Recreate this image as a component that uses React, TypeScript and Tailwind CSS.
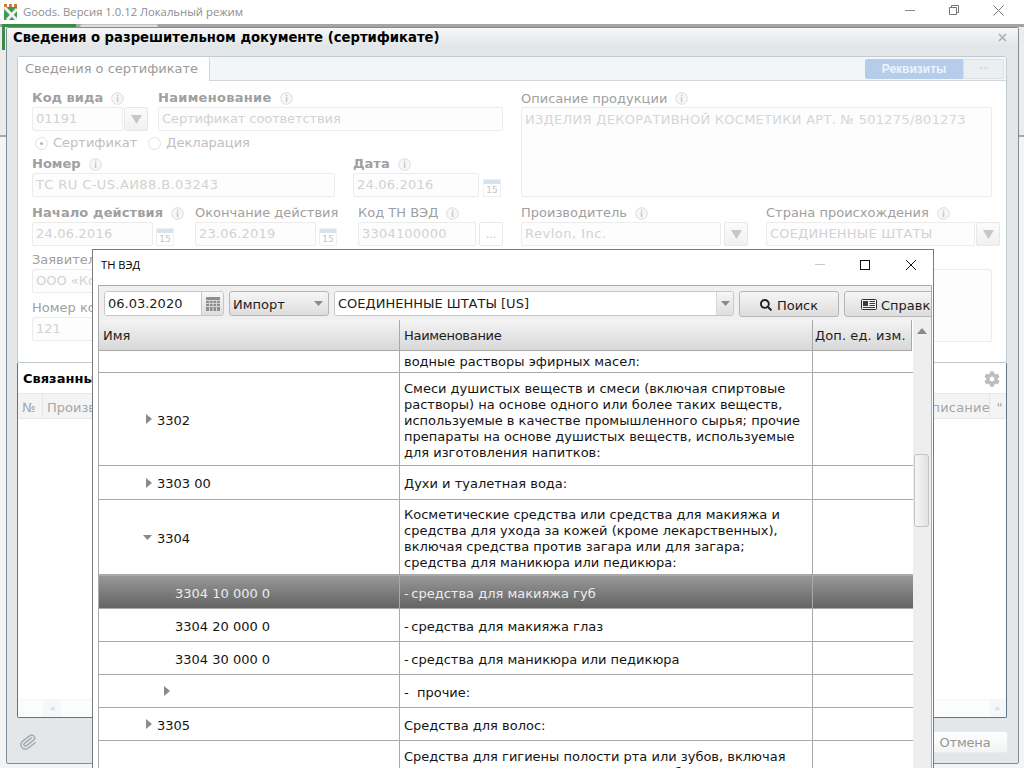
import { FaCog, FaSearch } from 'react-icons/fa';
import { Paperclip } from 'lucide-react';

const rows = [
  { h: 'h-[22px]', name: '', pad: '', arrow: '', first: true, lines: ['водные растворы эфирных масел:'] },
  { h: 'h-[93px]', name: '3302', pad: 'pl-[58px]', arrow: 'right', lines: ['Смеси душистых веществ и смеси (включая спиртовые', 'растворы) на основе одного или более таких веществ,', 'используемые в качестве промышленного сырья; прочие', 'препараты на основе душистых веществ, используемые', 'для изготовления напитков:'] },
  { h: 'h-[34px]', name: '3303 00', pad: 'pl-[58px]', arrow: 'right', lines: ['Духи и туалетная вода:'] },
  { h: 'h-[75px]', name: '3304', pad: 'pl-[58px]', arrow: 'down', lines: ['Косметические средства или средства для макияжа и', 'средства для ухода за кожей (кроме лекарственных),', 'включая средства против загара или для загара;', 'средства для маникюра или педикюра:'] },
  { h: 'h-[34px]', name: '3304 10 000 0', pad: 'pl-[76px]', arrow: '', selected: true, lines: ['-\u2009средства для макияжа губ'] },
  { h: 'h-[33px]', name: '3304 20 000 0', pad: 'pl-[76px]', arrow: '', lines: ['-\u2009средства для макияжа глаз'] },
  { h: 'h-[33px]', name: '3304 30 000 0', pad: 'pl-[76px]', arrow: '', lines: ['-\u2009средства для маникюра или педикюра'] },
  { h: 'h-[33px]', name: '', pad: 'pl-[76px]', arrow: 'right', lines: ['-  прочие:'] },
  { h: 'h-[33px]', name: '3305', pad: 'pl-[58px]', arrow: 'right', lines: ['Средства для волос:'] },
  { h: 'h-[90px]', name: '', pad: '', arrow: '', top: true, lines: ['Средства для гигиены полости рта или зубов, включая', 'фиксирующие порошки и пасты для зубных протезов'] },
];

function Info() {
  return (
    <svg width="13" height="13" viewBox="0 0 13 13" className="ml-2 shrink-0">
      <circle cx="6.5" cy="6.5" r="5.8" fill="#f7f7f7" stroke="#dcdcdc" />
      <rect x="5.8" y="2.8" width="1.5" height="1.5" fill="#c8c8c8" />
      <rect x="5.8" y="5.2" width="1.5" height="4.8" fill="#c8c8c8" />
    </svg>
  );
}

function Label({ text, bold, className = '', noInfo }: { text: string; bold?: boolean; className?: string; noInfo?: boolean }) {
  return (
    <div className={`flex h-4 items-center whitespace-nowrap text-[13px] text-[#a0a0a0] ${bold ? 'font-bold' : ''} ${className}`}>
      {text}
      {!noInfo && <Info />}
    </div>
  );
}

function Input({ value, className = '' }: { value: string; className?: string }) {
  return (
    <div className={`flex h-6 shrink-0 items-center overflow-hidden whitespace-nowrap rounded-[2px] border border-[#ececec] bg-[#fdfdfd] px-[3px] text-[13px] text-[#d2d2d2] ${className}`}>
      {value}
    </div>
  );
}

function DropBtn() {
  return (
    <div className="flex h-6 w-6 shrink-0 items-center justify-center rounded-[2px] border border-[#e8e8e8] bg-gradient-to-b from-[#fcfcfc] to-[#f0f0f0]">
      <svg width="11" height="9" viewBox="0 0 11 9"><path d="M0 0h11L5.5 9z" fill="#c2c8cc" /></svg>
    </div>
  );
}

function Cal() {
  return (
    <div className="flex h-[18px] w-[18px] shrink-0 flex-col self-end overflow-hidden border border-[#eef0f2] bg-white">
      <div className="h-1 bg-[#d6e3ee]" />
      <div className="text-center text-[9px] leading-[12px] text-[#c4c4c4]">15</div>
    </div>
  );
}

function Arrow({ dir }: { dir: string }) {
  if (dir === 'down') {
    return <svg width="9" height="5" viewBox="0 0 9 5" className="absolute -ml-[14px] -mt-[3px]"><path d="M0 0h9L4.5 5z" fill="#8a8a8a" /></svg>;
  }
  return <svg width="6" height="10" viewBox="0 0 6 10" className="absolute -ml-[11px] -mt-[3px]"><path d="M0 0l6 5-6 5z" fill="#8a8a8a" /></svg>;
}

function TreeRow({ row }: { row: (typeof rows)[number] }) {
  const sel = row.selected;
  return (
    <div className={`grid shrink-0 grid-cols-[301px_412px_99px] border-b border-[#a9a9a9] ${row.h} ${sel ? 'border-t bg-gradient-to-b from-[#989898] to-[#646464] text-[#ececec]' : 'bg-white text-[#141414]'}`}>
      <div className={`flex items-center border-r border-[#a9a9a9] pt-[3px] text-[13px] ${row.pad}`}>
        {row.arrow && <Arrow dir={row.arrow} />}
        <span className="whitespace-pre">{row.name}</span>
      </div>
      <div className={`flex flex-col pl-1 text-[13px] leading-[16px] ${row.top ? 'pt-2' : row.first ? 'justify-center' : 'justify-center pt-[3px]'}`}>
        {row.lines.map((l) => <div key={l} className="whitespace-pre">{l}</div>)}
      </div>
      <div className="border-l border-[#a9a9a9]" />
    </div>
  );
}

function AppIcon() {
  return (
    <svg width="16" height="17" viewBox="0 0 16 17" className="shrink-0">
      <rect x="1" y="3" width="13" height="13" fill="#3f9a50" />
      <path d="M1 3l13 13M14 5L4 16" stroke="#f1f1f1" strokeWidth="3" />
      <path d="M1 0h3v3H1zM6 0h3v3H6zM11 0h3v3h-3z" fill="#d9772c" />
    </svg>
  );
}

function NewsIcon() {
  return (
    <svg width="16" height="11" viewBox="0 0 16 11" className="shrink-0">
      <rect x="0.5" y="0.5" width="15" height="10" rx="1" fill="#f4f4f4" stroke="#2e2e2e" />
      <rect x="2" y="2" width="5" height="5" fill="#3a3a3a" />
      <path d="M8.5 2.5h5.5M8.5 4.5h5.5M8.5 6.5h5.5M2 8.5h12" stroke="#3a3a3a" />
    </svg>
  );
}

export default function App() {
  return (
    <div className="relative h-[768px] w-[1024px] overflow-hidden bg-white font-['DejaVu_Sans',sans-serif]">
      {/* main window chrome */}
      <div className="flex h-6 items-center pl-[3px]">
        <AppIcon />
        <span className="ml-1 font-['Open_Sans',sans-serif] text-[11.3px] text-[#8d8d8d]">Goods. Версия 1.0.12 Локальный режим</span>
        <div className="mb-1 ml-auto flex items-center">
          <svg width="12" height="12" viewBox="0 0 12 12" className="mr-[32px]"><path d="M1 6.5h10" stroke="#888" /></svg>
          <svg width="12" height="12" viewBox="0 0 12 12" className="mr-[33px]"><path d="M1.5 3.5h7v7h-7zM3.5 3.5v-2h7v7h-2" fill="none" stroke="#777" /></svg>
          <svg width="11" height="11" viewBox="0 0 11 11" className="mr-[20px]"><path d="M.5.5l10 10M10.5.5l-10 10" stroke="#777" /></svg>
        </div>
      </div>
      <div className="flex h-[744px] flex-col bg-[#ececec]">
        <div className="flex h-[3px] shrink-0 bg-[#a4a4a4] pl-[2px]">
          <div className="w-[74px] bg-[#3c8a4a]" />
          <div className="ml-1 w-[78px] rounded-t-[2px] border-x border-t border-[#c4c4c4] bg-[#dedede]" />
        </div>
        <div className="ml-[2px] h-[23px] w-[3px] shrink-0 bg-[#3c8a4a]" />
        <div className="mt-[85px] h-[2px] shrink-0 bg-[#a8a8a8]" />
        <div className="flex-1 bg-[#f4f4f4]" />
      </div>

      {/* certificate dialog */}
      <div className="absolute left-[6px] top-[27px] flex h-[737px] w-[1013px] flex-col rounded-[2px] border border-[#7d8d99] bg-[#e4e7ea]">
        <div className="flex h-[19px] items-center bg-gradient-to-b from-[#f6f7f8] to-[#e2e5e7] pl-[6px] pr-[11px]">
          <span className="whitespace-nowrap text-[13.2px] font-bold text-black">Сведения о разрешительном документе (сертификате)</span>
          <svg width="9" height="9" viewBox="0 0 9 9" className="ml-auto"><path d="M1 1l7 7M8 1L1 8" stroke="#a9b0b5" strokeWidth="1.6" /></svg>
        </div>

        <div className="mx-[10px] mt-[9px] flex h-[307px] w-[990px] flex-col rounded-[3px] border border-[#c1cbd2] bg-white">
          <div className="flex h-6 shrink-0 bg-[#f3f6f9]">
            <div className="flex w-[192px] items-center rounded-tr-[2px] border-r border-[#cfd7dd] bg-white pl-[7px] text-[13px] text-[#9b9b9b]">Сведения о сертификате</div>
            <div className="flex flex-1 items-center justify-end border-b border-[#cfd7dd] pr-[2px]">
              <div className="flex h-5 w-[98px] items-center justify-center rounded-l-[2px] bg-[#b5cdea] font-['Liberation_Sans',sans-serif] text-[12px] font-bold text-[#eef4fb]">Реквизиты</div>
              <div className="flex h-5 w-[41px] items-center justify-center rounded-r-[2px] border border-[#dde1e4] bg-[#eceff1] text-[7px] text-[#d6dde3]">◂ ▸</div>
            </div>
          </div>

          <div className="flex flex-col pl-[14px] pt-[9px]">
            <div className="flex">
              <div className="flex w-[489px] shrink-0 flex-col">
                <div className="flex h-[17px]">
                  <Label text="Код вида" bold className="w-[126px]" />
                  <Label text="Наименование" bold className="tracking-[0.3px]" />
                </div>
                <div className="flex items-center">
                  <Input value="01191" className="w-[91px]" />
                  <div className="ml-[1px]"><DropBtn /></div>
                  <Input value="Сертификат соответствия" className="ml-[10px] w-[345px] tracking-[-0.1px]" />
                </div>
                <div className="flex h-6 items-center pl-[3px] text-[13px] text-[#c0c0c0]">
                  <span className="flex h-[13px] w-[13px] items-center justify-center rounded-full border border-[#e2e2e2]"><span className="h-[3px] w-[3px] rounded-full bg-[#b5b5b5]" /></span>
                  <span className="ml-[5px]">Сертификат</span>
                  <span className="ml-[11px] h-[13px] w-[13px] rounded-full border border-[#e2e2e2]" />
                  <span className="ml-[5px]">Декларация</span>
                </div>
                <div className="flex h-[18px] pt-[1px]">
                  <Label text="Номер" bold className="w-[321px]" />
                  <Label text="Дата" bold />
                </div>
                <div className="flex items-center">
                  <Input value="ТС RU C-US.АИ88.В.03243" className="w-[303px] tracking-[0.4px]" />
                  <Input value="24.06.2016" className="ml-[18px] w-[126px] tracking-[0.2px]" />
                  <div className="ml-[4px] flex h-6"><Cal /></div>
                </div>
              </div>
              <div className="flex flex-1 flex-col">
                <Label text="Описание продукции" className="h-[17px]" />
                <div className="h-[90px] w-[471px] rounded-[2px] border border-[#ececec] bg-[#fdfdfd] px-[3px] py-[2px] text-[13px] tracking-[0.27px] text-[#d6d6d6]">ИЗДЕЛИЯ ДЕКОРАТИВНОЙ КОСМЕТИКИ АРТ. № 501275/801273</div>
              </div>
            </div>

            <div className="mt-2 flex h-4">
              <div className="w-[163px] overflow-hidden"><Label text="Начало действия" bold className="tracking-[0.1px]" /></div>
              <Label text="Окончание действия" noInfo className="w-[163px]" />
              <Label text="Код ТН ВЭД" className="w-[163px]" />
              <Label text="Производитель" className="w-[245px]" />
              <Label text="Страна происхождения" />
            </div>
            <div className="mt-[1px] flex">
              <Input value="24.06.2016" className="w-[121px] tracking-[0.2px]" />
              <div className="ml-[3px] flex h-6"><Cal /></div>
              <Input value="23.06.2019" className="ml-[21px] w-[121px] tracking-[0.2px]" />
              <div className="ml-[3px] flex h-6"><Cal /></div>
              <Input value="3304100000" className="ml-[21px] w-[118px] tracking-[0.2px]" />
              <div className="ml-[3px] flex h-6 w-6 shrink-0 items-end justify-center rounded-[2px] border border-[#e8e8e8] pb-[5px] text-[11px] leading-none text-[#c2c2c2]">...</div>
              <Input value="Revlon, Inc." className="ml-[18px] w-[200px] tracking-[0.5px]" />
              <div className="ml-[3px]"><DropBtn /></div>
              <Input value="СОЕДИНЕННЫЕ ШТАТЫ" className="ml-[18px] w-[209px] tracking-[0.2px]" />
              <div className="ml-[1px]"><DropBtn /></div>
            </div>

            <div className="mt-[6px] flex">
              <div className="flex w-[489px] shrink-0 flex-col">
                <Label text="Заявитель" noInfo />
                <Input value="ООО «Косметик»" className="mt-[1px] w-[471px]" />
                <Label text="Номер контракта" noInfo className="mt-[7px]" />
                <Input value="121" className="mt-[1px] w-[471px]" />
              </div>
              <div className="flex flex-1 flex-col">
                <Label text="Адрес" noInfo />
                <div className="mt-[1px] h-[73px] w-[471px] rounded-[2px] border border-[#ececec] bg-[#fdfdfd]" />
              </div>
            </div>
          </div>
        </div>

        <div className="mx-[10px] flex h-[355px] w-[990px] flex-col rounded-b-[2px] border border-t-0 border-[#5f7688] bg-white">
          <div className="flex h-[30px] shrink-0 items-center pl-[5px] pr-[6px] pt-[2px]">
            <span className="whitespace-nowrap text-[13px] font-bold text-black">Связанные документы</span>
            <FaCog className="ml-auto text-[16px] text-[#bdbdbd]" />
          </div>
          <div className="flex h-[26px] shrink-0 items-center border-y border-[#e8e8e8] bg-[#f4f4f4] text-[13px] text-[#a6a6a6]">
            <div className="flex h-full w-[25px] items-center justify-center border-r border-[#e6e6e6] pr-[2px] pt-[3px]">№</div>
            <div className="flex h-full flex-1 items-center border-r border-[#e6e6e6] pl-1 pt-[3px]">Производитель</div>
            <div className="flex h-full w-[80px] items-center border-r border-[#e6e6e6] pl-[11px] pt-[3px] tracking-[0.2px]">Описание</div>
            <div className="flex h-full w-[16px] items-center justify-center pl-[3px] pt-[3px]">"</div>
          </div>
          <div className="flex-1" />
          <div className="flex h-[18px] shrink-0 items-center border-t border-[#f4f6f7] bg-[#fbfcfc]">
            <div className="ml-[25px] flex h-full w-[18px] items-center justify-center bg-[#f5f7f8] text-[9px] text-[#dde0e3]">◂</div>
            <div className="ml-auto flex h-full w-[16px] items-center justify-center bg-[#f5f7f8] text-[9px] text-[#dde0e3]">▸</div>
          </div>
        </div>

        <div className="flex flex-1 items-center justify-between pl-[12px] pr-[10px] pt-[2px]">
          <Paperclip size={18} className="rotate-[8deg] text-[#a4adb3]" />
          <div className="flex h-[22px] w-[84px] items-center justify-center rounded-[3px] border border-[#e9ecee] bg-gradient-to-b from-[#ffffff] to-[#f2f4f5] pr-[2px] pt-[3px] text-[13px] tracking-[-0.2px] text-[#969696]">Отмена</div>
        </div>
      </div>

      {/* ТН ВЭД window */}
      <div className="absolute left-[92px] top-[249px] flex h-[560px] w-[842px] flex-col border border-[#7a7a7a] bg-white">
        <div className="flex h-[35px] shrink-0 items-center pb-[5px] pl-2">
          <span className="font-['Open_Sans',sans-serif] text-[11.2px] text-black">ТН ВЭД</span>
          <div className="ml-auto flex items-center">
            <svg width="12" height="12" viewBox="0 0 12 12" className="mr-[33px]"><path d="M1 5.5h10" stroke="#c8c8c8" /></svg>
            <svg width="12" height="12" viewBox="0 0 12 12" className="mr-[34px]"><rect x="1.5" y="1.5" width="9" height="9" fill="none" stroke="#111" /></svg>
            <svg width="12" height="12" viewBox="0 0 12 12" className="mr-[16px]"><path d="M1 1l10 10M11 1L1 11" stroke="#111" /></svg>
          </div>
        </div>
        <div className="ml-[5px] flex w-[834px] flex-1 flex-col overflow-hidden border-x border-t border-[#ababab]">
          <div className="flex h-[34px] shrink-0 items-start gap-[5px] overflow-hidden bg-[#f0f0f0] pl-[5px] pt-[5px] text-[13px] text-[#1c1c1c]">
            <div className="flex h-[25px] w-[120px] shrink-0 overflow-hidden rounded-[3px] border border-[#c8c8c8]">
              <div className="flex flex-1 items-center bg-white pl-[3px] pt-[1px]">06.03.2020</div>
              <div className="flex w-[22px] items-center justify-center border-l border-[#c8c8c8] bg-gradient-to-b from-[#f8f8f8] to-[#dedede]">
                <svg width="14" height="14" viewBox="0 0 14 14">
                  <rect width="14" height="14" fill="#8e8e8e" />
                  <path d="M0 3.5h14M0 6.5h14M0 9.5h14M3.5 3v11M7 3v11M10.5 3v11" stroke="#d4d4d4" />
                </svg>
              </div>
            </div>
            <div className="flex h-[25px] w-[100px] shrink-0 items-center justify-between rounded-[3px] border border-[#b5b5b5] bg-gradient-to-b from-[#f6f6f6] to-[#dddddd] pl-[3px] pr-[5px]">
              <span className="pt-[3px]">Импорт</span>
              <svg width="9" height="5" viewBox="0 0 9 5"><path d="M0 0h9L4.5 5z" fill="#8a8a8a" /></svg>
            </div>
            <div className="flex h-[25px] w-[400px] shrink-0 overflow-hidden rounded-[3px] border border-[#c8c8c8]">
              <div className="flex flex-1 items-center bg-white pl-[3px] pt-[1px]">СОЕДИНЕННЫЕ ШТАТЫ [US]</div>
              <div className="flex w-[17px] items-center justify-center border-l border-[#d6d6d6] bg-gradient-to-b from-[#f6f6f6] to-[#dedede]">
                <svg width="9" height="5" viewBox="0 0 9 5"><path d="M0 0h9L4.5 5z" fill="#8a8a8a" /></svg>
              </div>
            </div>
            <div className="flex h-[26px] w-[100px] shrink-0 items-center justify-center gap-[5px] rounded-[3px] border border-[#b5b5b5] bg-gradient-to-b from-[#f6f6f6] to-[#dddddd]">
              <FaSearch className="mt-[1px] text-[12px] text-[#222]" />
              <span className="pt-[3px]">Поиск</span>
            </div>
            <div className="flex h-[26px] w-[110px] shrink-0 items-center gap-[4px] rounded-[3px] border border-[#b5b5b5] bg-gradient-to-b from-[#f6f6f6] to-[#dddddd] pl-4">
              <NewsIcon />
              <span className="pt-[3px]">Справка</span>
            </div>
          </div>

          <div className="flex flex-1 overflow-hidden">
            <div className="flex w-[814px] shrink-0 flex-col bg-white">
              <div className="grid h-[31px] w-[813px] shrink-0 grid-cols-[301px_412px_100px] border-b border-[#a9a9a9] bg-gradient-to-b from-[#f4f4f4] to-[#d8d8d8] text-[13px] text-[#1c1c1c]">
                <div className="flex items-center border-r border-[#a9a9a9] pl-1 pt-[2px]">Имя</div>
                <div className="flex items-center pl-1 pt-[2px] tracking-[-0.3px]">Наименование</div>
                <div className="flex items-center border-x border-[#a9a9a9] pl-[2px] pt-[2px] tracking-[0.1px]">Доп. ед. изм.</div>
              </div>
              {rows.map((r, i) => <TreeRow key={i} row={r} />)}
            </div>
            <div className="flex w-[18px] shrink-0 flex-col bg-[#eeeeee]">
              <div className="flex h-[22px] shrink-0 items-center justify-center">
                <svg width="10" height="6" viewBox="0 0 10 6"><path d="M0 6h10L5 0z" fill="#8a8a8a" /></svg>
              </div>
              <div className="ml-[1px] mt-[112px] h-[73px] w-[15px] rounded-[3px] border border-[#c4c4c4] bg-gradient-to-r from-[#f6f6f6] to-[#e2e2e2]" />
            </div>
          </div>
        </div>
      </div>
    </div>
  );
}
